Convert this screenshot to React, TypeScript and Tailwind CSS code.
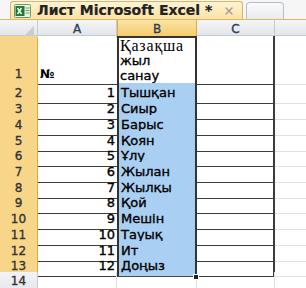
import { X } from 'lucide-react';

const ANIMALS = ['Тышқан', 'Сиыр', 'Барыс', 'Қоян', 'Ұлу', 'Жылан', 'Жылқы', 'Қой', 'Мешін', 'Тауық', 'Ит', 'Доңыз'];
const ROW_HEIGHTS = [16, 16, 16, 15, 16, 16, 15, 16, 16, 16, 15, 16];

const font = { fontFamily: '"DejaVu Sans", Verdana, sans-serif' };

function ExcelIcon() {
  return (
    <svg width="17" height="14" viewBox="0 0 17 14">
      <rect x="0.5" y="0.5" width="16" height="13" rx="1" fill="#e8f3e6" stroke="#6e9a66" />
      <rect x="1.5" y="2" width="9" height="10" fill="#1f7a2f" />
      <path d="M3.5 4l4 6M7.5 4l-4 6" stroke="#fff" strokeWidth="1.4" />
      <path d="M11.5 4h4M11.5 6.5h4M11.5 9h4" stroke="#6e9a66" strokeWidth="1" />
    </svg>
  );
}

export default function App() {
  return (
    <div className="w-[306px] h-[288px] overflow-hidden bg-white text-[13px] text-black [-webkit-text-stroke:0.35px]" style={font}>
      {/* Tabs */}
      <div className="h-[20px] flex items-end bg-[#f6f6f6] border-b border-[#d9b866] pl-[10px]">
        <div className="h-[18px] w-[233px] flex items-center gap-[6px] pl-[3px] rounded-t-[3px] border border-b-0 border-[#d8b865] bg-gradient-to-b from-[#fff3d2] to-[#fbe2a4]">
          <ExcelIcon />
          <span className="font-bold text-[14px] text-[#222] [-webkit-text-stroke:0.2px] whitespace-nowrap">Лист Microsoft Excel *</span>
          <X className="w-[12px] h-[12px] text-[#9a9a9a] shrink-0 ml-[5px]" strokeWidth={2.5} />
        </div>
        <div className="h-[17px] w-[38px] ml-[3px] rounded-t-[4px] border border-b-0 border-[#b9bec6] bg-gradient-to-b from-[#fbfbfb] to-[#e9ebee]" />
      </div>

      {/* Column headers */}
      <div className="grid grid-cols-[38px_79px_80px_78px_1fr] h-[16px] text-[12px] text-[#2c3e56] bg-gradient-to-b from-[#f4f5f7] to-[#e3e6ea] border-b border-[#c6cbd2]">
        <div className="relative border-r border-[#c6cbd2]">
          <div className="absolute right-[3px] bottom-[2px] w-0 h-0 border-l-[10px] border-l-transparent border-b-[10px] border-b-[#c9cdd3]" />
        </div>
        <div className="flex items-center justify-center border-r border-[#c6cbd2]">A</div>
        <div className="flex items-center justify-center bg-gradient-to-b from-[#fbe3a5] to-[#f5c965] border-x border-[#e0a93a]">B</div>
        <div className="flex items-center justify-center border-r border-[#c6cbd2]">C</div>
        <div />
      </div>

      {/* Row 1 */}
      <div className="grid grid-cols-[38px_79px_80px_78px_1fr] h-[47px]">
        <div className="flex items-end justify-center pb-[1px] text-[12px] text-[#333] bg-[#f7d68a] border-r border-[#e0a93a] border-b border-b-[#e4bd67]">1</div>
        <div className="flex items-end pl-[2px] pb-[1px] border-b border-[#3c3c3c] font-bold text-[12px] [-webkit-text-stroke:0px]">№</div>
        <div className="flex flex-col justify-end border-x-[2px] border-[#333] border-t-[2px] border-b border-b-[#333] pl-[1px] pb-[1px] leading-[15px]">
          <span className="text-[16px] tracking-[0.8px] [-webkit-text-stroke:0px]" style={{ fontFamily: '"Liberation Serif", serif' }}>Қазақша</span>
          <span>жыл</span>
          <span>санау</span>
        </div>
        <div className="border-r-[2px] border-[#3c3c3c] border-b border-b-[#3c3c3c]" />
        <div className="border-b border-[#e1e1e1]" />
      </div>

      {ANIMALS.map((a, i) => (
        <div
          key={a}
          className="grid grid-cols-[38px_79px_80px_78px_1fr]"
          style={{ height: ROW_HEIGHTS[i] }}
        >
          <div className="flex items-center justify-center text-[12px] text-[#333] bg-[#f7d68a] border-r border-[#e0a93a] border-b border-b-[#e4bd67]">
            {i + 2}
          </div>
          <div className="flex items-center justify-end pr-[2px] border-b border-[#3c3c3c]">{i + 1}</div>
          <div className="relative flex items-center pl-[2px] bg-[#a9cff2] border-x-[2px] border-[#333] border-b border-b-[#4a4a4a] leading-none">
            {a}
            {i === ANIMALS.length - 1 && (
              <div className="absolute right-[-4px] bottom-[-4px] w-[6px] h-[6px] bg-[#222] border border-white" />
            )}
          </div>
          <div className="border-r-[2px] border-[#3c3c3c] border-b border-b-[#3c3c3c]" />
          <div className="border-b border-[#e1e1e1]" />
        </div>
      ))}

      {/* Row 14 */}
      <div className="grid grid-cols-[38px_79px_80px_78px_1fr] h-[18px]">
        <div className="flex items-center justify-center text-[12px] text-[#333] bg-gradient-to-b from-[#f2f3f5] to-[#e6e8ec] border-r border-[#c6cbd2] border-b border-b-[#d5d8dd]">14</div>
        <div className="border-r border-b border-[#e1e1e1]" />
        <div className="border-r border-b border-[#e1e1e1]" />
        <div className="border-r border-b border-[#e1e1e1]" />
        <div className="border-b border-[#e1e1e1]" />
      </div>
    </div>
  );
}
